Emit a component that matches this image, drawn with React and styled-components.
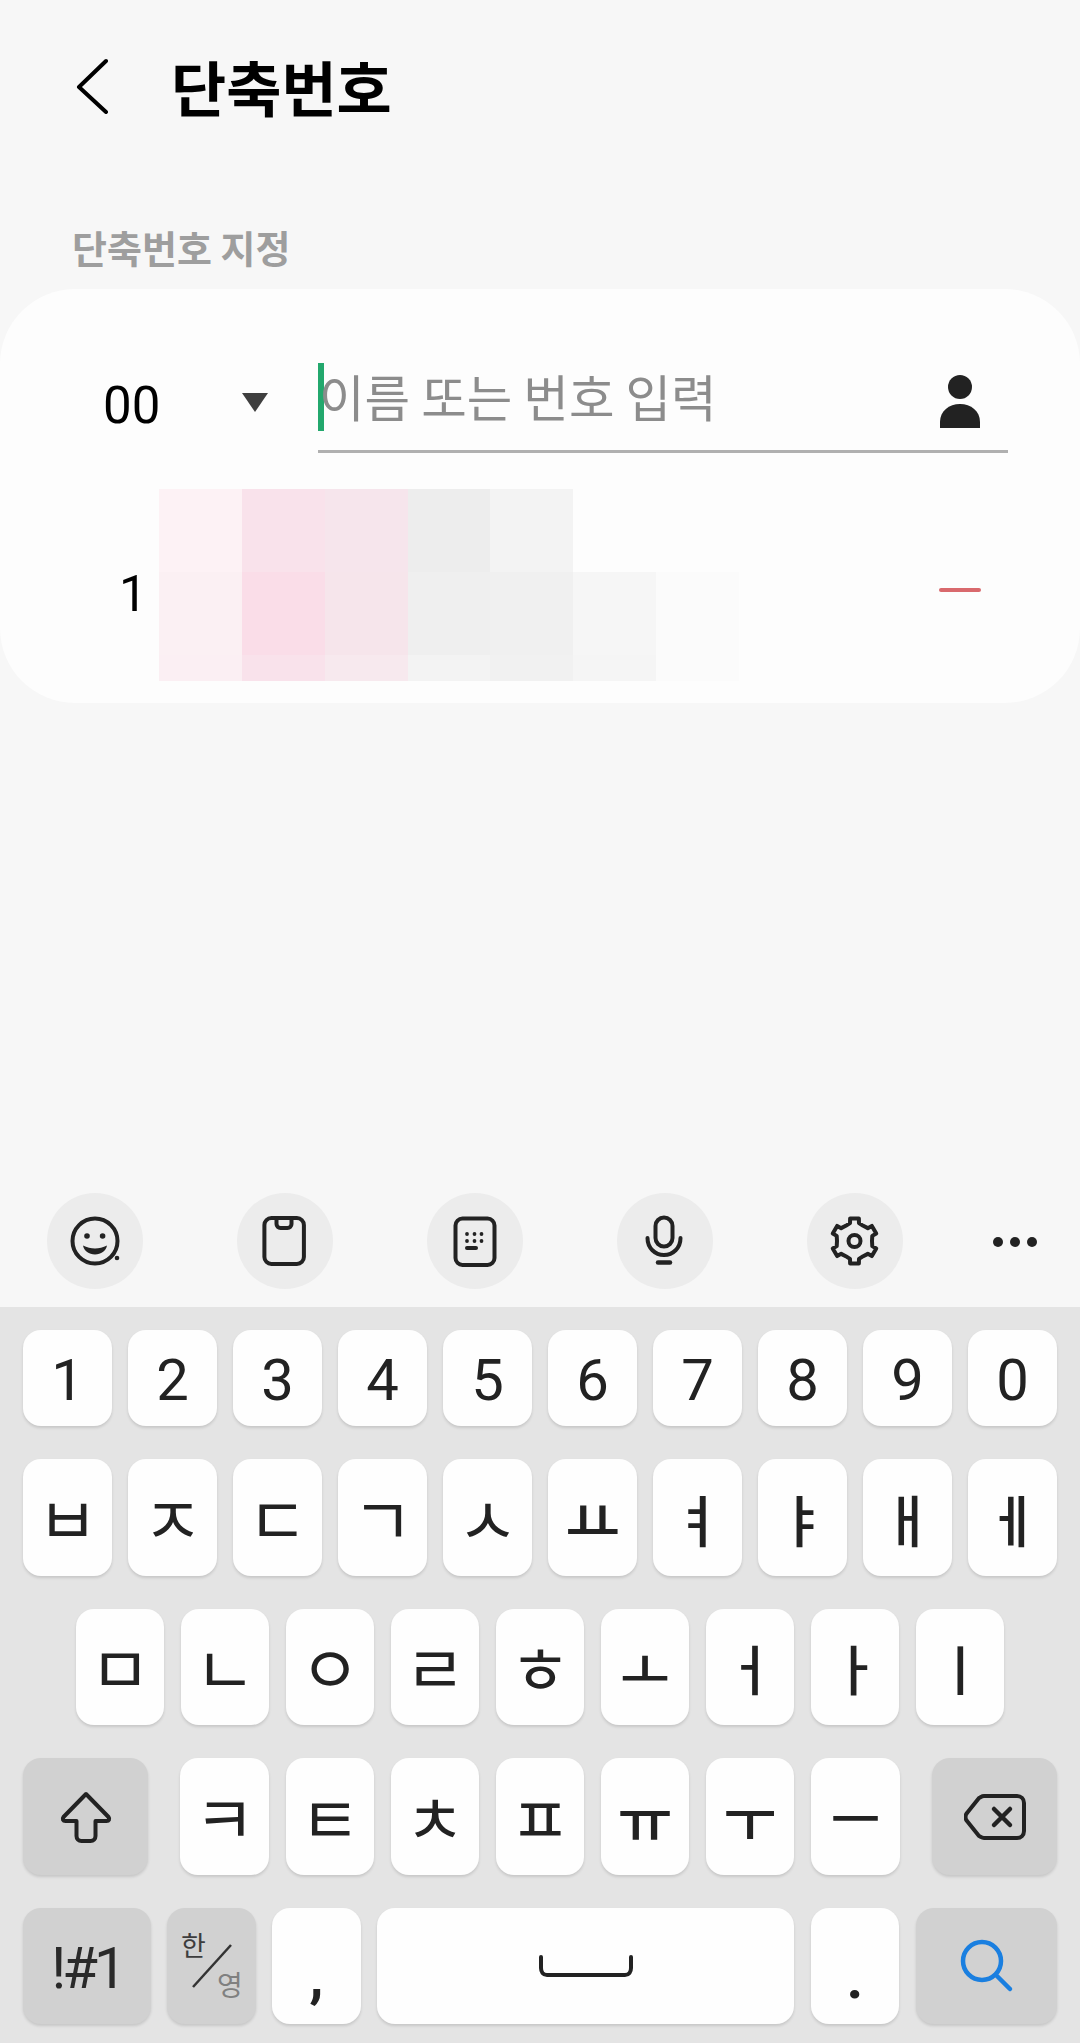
import React from "react";
import styled, { createGlobalStyle } from "styled-components";

const Global = createGlobalStyle`
  html, body { margin: 0; padding: 0; background: #f7f7f7; }
  * { box-sizing: border-box; }
`;

const KR = `"Noto Sans CJK KR", "Noto Sans", sans-serif`;
const NUM = `Roboto, "Noto Sans CJK KR", sans-serif`;

const Page = styled.div`
  width: 1080px; height: 2043px; background: #f7f7f7;
  display: flex; flex-direction: column; overflow: hidden;
`;
const Header = styled.header`
  height: 172px; display: flex; align-items: center; padding-left: 76px; gap: 63px;
`;
const Title = styled.h1`
  margin: 0; font: 700 60px/1 ${KR}; color: #000; letter-spacing: 0;
`;
const SectionLabel = styled.div`
  height: 117px; padding: 53px 0 0 72px; font: 700 38px/44px ${KR}; color: #9e9e9e;
`;
const Card = styled.section`
  height: 414px; background: #fdfdfd; border-radius: 75px; padding-top: 74px;
  display: flex; flex-direction: column;
`;
const InputRow = styled.div`
  display: flex; align-items: flex-start; padding-left: 103px;
`;
const NumberSelect = styled.div`
  width: 215px; height: 90px; display: flex; align-items: center; padding-bottom: 6px; gap: 86px;
`;
const SelectValue = styled.span`
  font: 400 51px/1 ${NUM}; color: #000; width: 53px;
`;
const Caret = styled.span`
  width: 0; height: 0; margin-top: -6px;
  border-left: 13px solid transparent; border-right: 13px solid transparent;
  border-top: 19px solid #3f3f3f;
`;
const Field = styled.div`
  width: 690px; height: 90px; border-bottom: 3px solid #b0b0b0;
  display: flex; align-items: flex-start; position: relative;
`;
const TextCursor = styled.span`
  width: 6px; height: 68px; background: #23a86d; flex: none;
`;
const Placeholder = styled.span`
  font: 400 49.5px/66px ${KR}; color: #8c8c8c; margin-left: -5px; flex: 1;
`;
const PersonBtn = styled.svg`
  width: 42px; height: 54px; margin: 12px 27px 0 0; flex: none;
`;
const EntryRow = styled.div`
  display: flex; align-items: flex-start; margin-top: 36px; padding-left: 119px;
`;
const EntryNumber = styled.span`
  width: 40px; margin-top: 74px; font: 400 50px/62px ${NUM}; color: #000;
`;
const Mosaic = styled.div`
  width: 580px; height: 192px; display: grid;
  grid-template-columns: repeat(7, 1fr); grid-template-rows: 83px 83px 26px;
`;
const Tile = styled.div`
  background: ${(p) => p.$c};
`;
const MinusBtn = styled.span`
  width: 42px; height: 4px; border-radius: 2px; background: #d9696d;
  margin: 99px 0 0 200px;
`;
const Spacer = styled.div`
  flex: 1;
`;
const Toolbar = styled.div`
  height: 114px; padding-left: 47px; display: flex; gap: 94.5px; align-items: flex-start;
`;
const ToolCircle = styled.div`
  width: 95.5px; height: 95.5px; border-radius: 50%; background: #ececec; flex: none;
  svg { display: block; }
`;
const MoreBtn = styled.div`
  display: flex; gap: 7px; margin: 44px 0 0 -4px;
`;
const Dot = styled.span`
  width: 10px; height: 10px; border-radius: 50%; background: #222;
`;
const Keyboard = styled.div`
  height: 736px; background: #e4e4e4; padding: 23px 23px 19px;
  display: flex; flex-direction: column; gap: 33px;
`;
const Row = styled.div`
  display: flex; height: ${(p) => p.$h}px; gap: ${(p) => p.$gap || 16}px;
  justify-content: ${(p) => p.$justify || "flex-start"};
  padding-left: ${(p) => p.$pl || 0}px;
`;
const KeyGroup = styled.div`
  display: flex; gap: 17px;
`;
const Key = styled.div`
  width: ${(p) => p.$w || 89}px; height: 100%; flex: none; position: relative;
  border-radius: 18px; background: ${(p) => (p.$gray ? "#d1d1d1" : "#fefefe")};
  box-shadow: 0 2px 3px rgba(0, 0, 0, 0.13);
  margin-left: ${(p) => p.$ml || 0}px;
  display: flex; align-items: center; justify-content: center; color: #222;
`;
const Digit = styled.span`
  font: 400 58px/1 ${NUM}; color: #222; margin-top: 4px;
`;
const Jamo = styled.span`
  font: ${(p) => (p.$vowel ? 500 : 400)} ${(p) => p.$size}px/1 ${KR}; color: #222;
  margin-top: ${(p) => (p.$vowel ? 1 : -4)}px;
`;
const SymKey = styled.span`
  font: 400 58px/1 ${NUM}; color: #2a2a2a; letter-spacing: -4px; margin-top: 4px;
`;
const Punct = styled.span`
  font: 700 58px/1 ${NUM}; color: #222; margin-top: ${(p) => p.$mt}px;
`;
const LangTop = styled.span`
  position: absolute; left: 14px; top: 23px; font: 400 27px/1 ${KR}; color: #3d3d3d;
`;
const LangBottom = styled.span`
  position: absolute; left: 50px; top: 62px; font: 400 28px/1 ${KR}; color: #808080;
`;
const LangSlash = styled.svg`
  position: absolute; left: 24px; top: 36px; width: 42px; height: 44px;
`;

const digits = "1234567890".split("");
const sizes = {
  ㅂ: 66, ㅈ: 66, ㄷ: 66, ㄱ: 66, ㅅ: 66, ㅛ: 60, ㅕ: 56, ㅑ: 56, ㅐ: 56, ㅔ: 56,
  ㅁ: 66, ㄴ: 66, ㅇ: 66, ㄹ: 66, ㅎ: 66, ㅗ: 54, ㅓ: 54, ㅏ: 54, ㅣ: 54,
  ㅋ: 66, ㅌ: 66, ㅊ: 66, ㅍ: 66, ㅠ: 60, ㅜ: 58, ㅡ: 54,
};
const vowels = "ㅛㅕㅑㅐㅔㅗㅓㅏㅣㅠㅜㅡ";
const row2 = "ㅂㅈㄷㄱㅅㅛㅕㅑㅐㅔ".split("");
const row3 = "ㅁㄴㅇㄹㅎㅗㅓㅏㅣ".split("");
const row4 = "ㅋㅌㅊㅍㅠㅜㅡ".split("");

const JamoLabel = ({ d }) => (
  <Jamo $size={sizes[d]} $vowel={vowels.includes(d)}>{d}</Jamo>
);

const mosaic = [
  ["#fdf2f5", "#f9e2eb", "#f6e5ec", "#ededed", "#f3f3f3", "#fdfdfd", "#fdfdfd"],
  ["#fbf0f3", "#fadde8", "#f6e5eb", "#efefef", "#f0f0f0", "#f6f6f6", "#fbfbfb"],
  ["#fbeff3", "#f9e2eb", "#f7e9ee", "#f3f3f3", "#f1f1f1", "#f5f5f5", "#fbfbfb"],
].flat();

function gearPath(cx, cy, R, r) {
  const pts = [];
  for (let i = 0; i < 6; i++) {
    const a = -90 + i * 60;
    [[-30, r], [-14, r + 1], [-11, R], [11, R], [14, r + 1]].forEach(([d, rad]) => {
      const t = ((a + d) * Math.PI) / 180;
      pts.push(`${(cx + rad * Math.cos(t)).toFixed(2)} ${(cy + rad * Math.sin(t)).toFixed(2)}`);
    });
  }
  return `M${pts.join("L")}Z`;
}

const icon = { width: 95, height: 95, viewBox: "0 0 95 95", fill: "none", stroke: "#222", strokeWidth: 4, strokeLinecap: "round", strokeLinejoin: "round" };

const Smile = () => (
  <svg {...icon}>
    <circle cx="48" cy="48" r="22.5" />
    <circle cx="40" cy="43" r="2.8" fill="#222" stroke="none" />
    <circle cx="55.6" cy="43" r="2.8" fill="#222" stroke="none" />
    <path d="M36 52.5c4 2 8 3 12 3s8-1 12-3c-1 5.5-6 9-12 9s-11-3.5-12-9Z" fill="#222" stroke="none" />
    <circle cx="70" cy="65" r="2.3" fill="#222" stroke="none" />
  </svg>
);
const Clip = () => (
  <svg {...icon}>
    <rect x="27.4" y="25" width="39.5" height="46" rx="7" />
    <path d="M39.5 25v6a4 4 0 0 0 4 4h7a4 4 0 0 0 4-4v-6" />
  </svg>
);
const Keypad = () => (
  <svg {...icon}>
    <rect x="28.5" y="25.5" width="39" height="46.5" rx="7" />
    {[40, 47.5, 54.5].map((x) =>
      [41, 48].map((y) => <circle key={`${x}-${y}`} cx={x} cy={y} r="1.9" fill="#222" stroke="none" />)
    )}
    <path d="M40 55h9" />
  </svg>
);
const Mic = () => (
  <svg {...icon}>
    <rect x="38.5" y="24.5" width="17" height="29" rx="8.5" />
    <path d="M30.5 45c0 10 7.5 17 16.5 17s16.5-7 16.5-17" />
    <path d="M41 69.5h12" strokeWidth="4.5" />
  </svg>
);
const Gear = () => (
  <svg {...icon}>
    <path d={gearPath(47.5, 48, 23, 17.5)} />
    <circle cx="47.5" cy="48" r="6" />
  </svg>
);

export default function App() {
  return (
    <Page>
      <Global />
      <Header>
        <svg width="32" height="56" viewBox="0 0 32 56" fill="none" stroke="#000" strokeWidth="4" strokeLinecap="round" strokeLinejoin="round">
          <path d="M30 3 3 29l27 25" />
        </svg>
        <Title>단축번호</Title>
      </Header>
      <SectionLabel>단축번호 지정</SectionLabel>
      <Card>
        <InputRow>
          <NumberSelect>
            <SelectValue>00</SelectValue>
            <Caret />
          </NumberSelect>
          <Field>
            <TextCursor />
            <Placeholder>이름 또는 번호 입력</Placeholder>
            <PersonBtn viewBox="0 0 42 54">
              <circle cx="21" cy="12" r="12" fill="#222" />
              <path d="M1 53V47C1 36 10 29 21 29S41 36 41 47V53Z" fill="#222" />
            </PersonBtn>
          </Field>
        </InputRow>
        <EntryRow>
          <EntryNumber>1</EntryNumber>
          <Mosaic>
            {mosaic.map((c, i) => (
              <Tile key={i} $c={c} />
            ))}
          </Mosaic>
          <MinusBtn />
        </EntryRow>
      </Card>
      <Spacer />
      <Toolbar>
        <ToolCircle><Smile /></ToolCircle>
        <ToolCircle><Clip /></ToolCircle>
        <ToolCircle><Keypad /></ToolCircle>
        <ToolCircle><Mic /></ToolCircle>
        <ToolCircle><Gear /></ToolCircle>
        <MoreBtn><Dot /><Dot /><Dot /></MoreBtn>
      </Toolbar>
      <Keyboard>
        <Row $h={96}>
          {digits.map((d) => (
            <Key key={d}><Digit>{d}</Digit></Key>
          ))}
        </Row>
        <Row $h={117}>
          {row2.map((d) => (
            <Key key={d}><JamoLabel d={d} /></Key>
          ))}
        </Row>
        <Row $h={116} $pl={53} $gap={17}>
          {row3.map((d) => (
            <Key key={d} $w={88}><JamoLabel d={d} /></Key>
          ))}
        </Row>
        <Row $h={117} $justify="space-between">
          <Key $gray $w={125}>
            <svg width="54" height="54" viewBox="0 0 54 54" fill="none" stroke="#222" strokeWidth="4" strokeLinejoin="round" strokeLinecap="round">
              <path d="M27 4 4.5 27c-1.5 2-.5 4 2 4h11v15c0 3 2 5 5 5h9c3 0 5-2 5-5V31h11c2.5 0 3.5-2 2-4Z" />
            </svg>
          </Key>
          <KeyGroup>
            {row4.map((d) => (
              <Key key={d} $w={d === "ㅋ" || d === "ㅡ" ? 89 : 88}><JamoLabel d={d} /></Key>
            ))}
          </KeyGroup>
          <Key $gray $w={125}>
            <svg width="62" height="46" viewBox="0 0 62 46" fill="none" stroke="#222" strokeWidth="4" strokeLinejoin="round" strokeLinecap="round">
              <path d="M20 2h33c4 0 7 3 7 7v28c0 4-3 7-7 7H20c-2 0-3-1-5-2L3 27c-2-2-2-6 0-8L15 4c2-1 3-2 5-2Z" />
              <path d="m30 15 16 16M46 15 30 31" strokeWidth="4.5" />
            </svg>
          </Key>
        </Row>
        <Row $h={116}>
          <Key $gray $w={128}><SymKey>!#1</SymKey></Key>
          <Key $gray>
            <LangTop>한</LangTop>
            <LangSlash viewBox="0 0 42 44" fill="none" stroke="#333" strokeWidth="2.5">
              <path d="M40 1 2 43" />
            </LangSlash>
            <LangBottom>영</LangBottom>
          </Key>
          <Key><Punct $mt={20}>,</Punct></Key>
          <Key $w={417}>
            <svg width="96" height="24" viewBox="0 0 96 24" fill="none" stroke="#222" strokeWidth="4" strokeLinecap="round" strokeLinejoin="round">
              <path d="M3 3v11c0 4 2 7 6 7h78c4 0 6-3 6-7V3" />
            </svg>
          </Key>
          <Key $w={88} $ml={1}><Punct $mt={24}>.</Punct></Key>
          <Key $gray $w={141} $ml={1}>
            <svg width="54" height="54" viewBox="0 0 54 54" fill="none" stroke="#1a7fe0" strokeWidth="4.5" strokeLinecap="round">
              <circle cx="22" cy="22" r="19" />
              <path d="m36 36 14 14" />
            </svg>
          </Key>
        </Row>
      </Keyboard>
    </Page>
  );
}
